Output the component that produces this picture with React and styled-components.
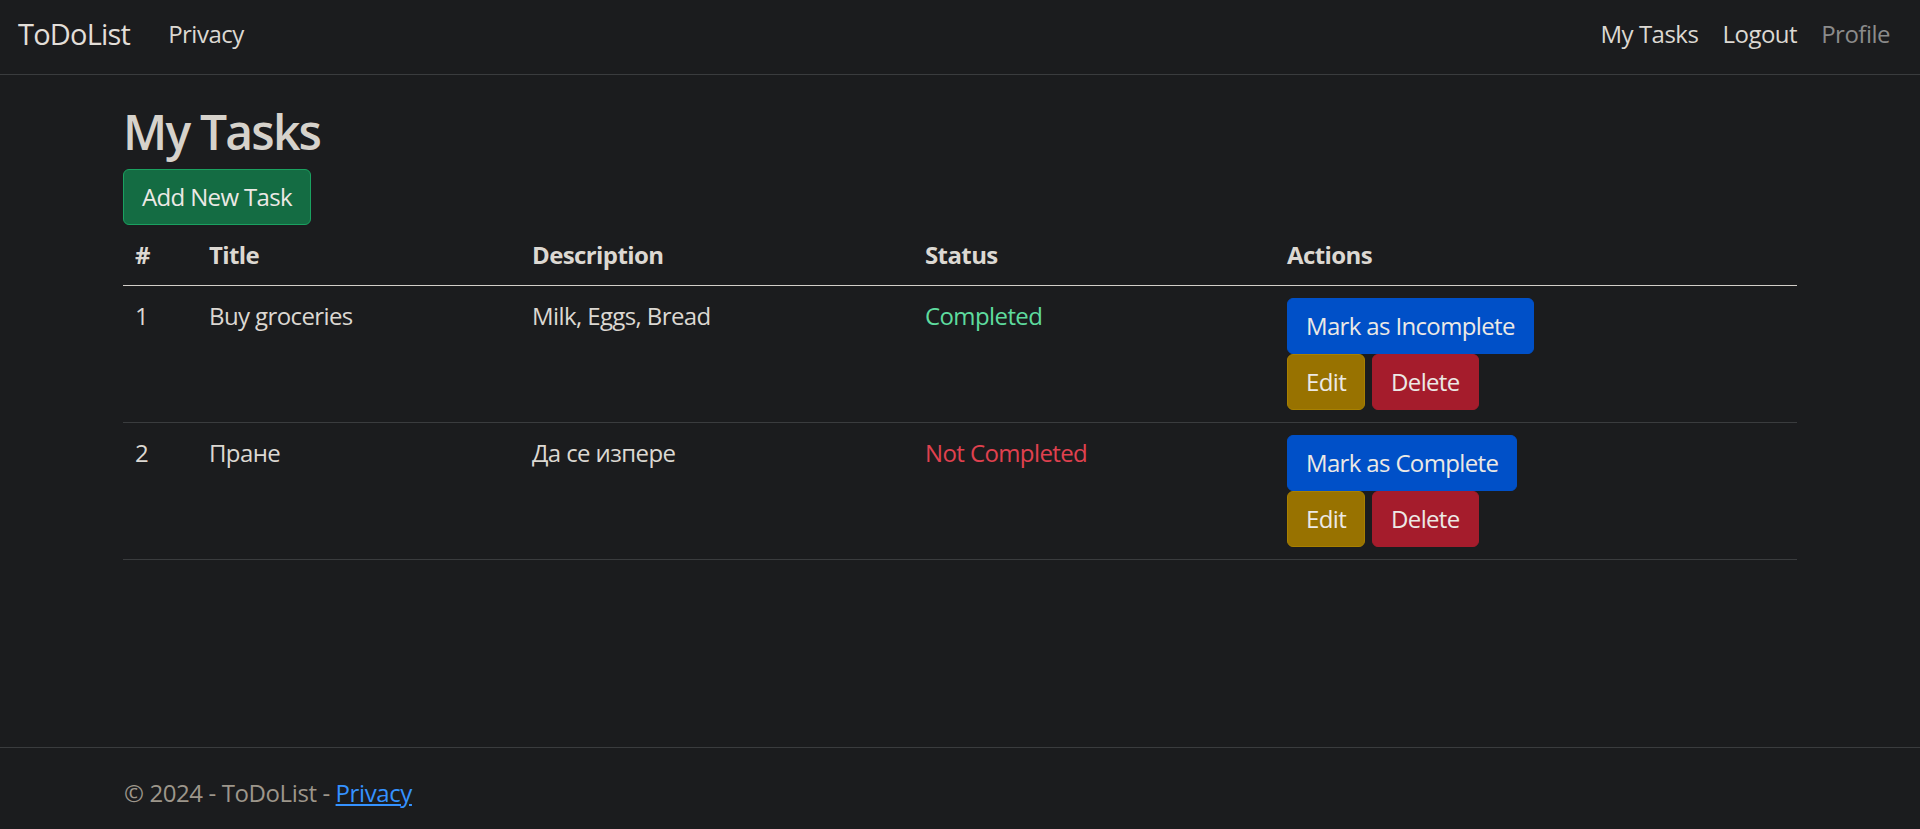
import styled, { createGlobalStyle } from 'styled-components';

const GlobalStyle = createGlobalStyle`
  html, body {
    margin: 0;
    padding: 0;
    background-color: #1b1c1e;
    overflow: hidden;
  }
  body {
    font-family: "Segoe UI", "Open Sans", "Noto Sans", sans-serif;
    font-size: 24px;
    line-height: 1.5;
    color: #dcd8d2;
  }
`;

const Page = styled.div`
  min-height: 100vh;
  display: flex;
  flex-direction: column;
`;

const Navbar = styled.nav`
  height: 75px;
  box-sizing: border-box;
  border-bottom: 1px solid #3a3c3e;
  display: flex;
  align-items: center;
  padding: 0 18px 7px;
`;

const Brand = styled.a`
  font-size: 29px;
  color: #e2ded8;
  margin-right: 26px;
  text-decoration: none;
  letter-spacing: -0.8px;
`;

const NavList = styled.div`
  display: flex;
  align-items: center;
  margin-left: ${(p) => (p.$right ? 'auto' : '0')};
`;

const NavLink = styled.a`
  padding: 0 12px;
  color: ${(p) => (p.$muted ? '#8b8b8b' : '#dcd8d2')};
  text-decoration: none;
  letter-spacing: -0.5px;
`;

const Main = styled.main`
  flex: 1;
  width: 1674px;
  margin: 24px auto 0;
`;

const Heading = styled.h2`
  font-size: 48px;
  font-weight: 600;
  line-height: 1.2;
  margin: 4px 0 8px;
  color: #d6d2cb;
  letter-spacing: -1.8px;
`;

const colors = {
  success: { bg: '#146c43', border: '#1aa160' },
  primary: { bg: '#0050c8', border: '#0050c8' },
  warning: { bg: '#987200', border: '#a88000' },
  danger: { bg: '#a51c2c', border: '#a51c2c' },
};

const Button = styled.button`
  font-family: inherit;
  font-size: 24px;
  line-height: 36px;
  padding: 9px 18px;
  border-radius: 6px;
  border: 1px solid ${(p) => colors[p.$variant].border};
  background-color: ${(p) => colors[p.$variant].bg};
  color: #ece9e5;
  cursor: pointer;
  letter-spacing: -0.65px;
`;

const Table = styled.table`
  width: 100%;
  table-layout: fixed;
  border-collapse: collapse;
`;

const Th = styled.th`
  text-align: left;
  font-weight: 700;
  padding: 12px;
  line-height: 36px;
  border-bottom: 1px solid #d2cec8;
  color: #dcd8d2;
  letter-spacing: -0.6px;
`;

const Td = styled.td`
  padding: 12px;
  line-height: 36px;
  vertical-align: top;
  border-bottom: 1px solid #3a3c3e;
  letter-spacing: -0.6px;
  color: ${(p) => p.$color || '#dcd8d2'};
`;

const Actions = styled.div`
  display: flex;
  flex-wrap: wrap;
  row-gap: 0;
  column-gap: 7px;
`;

const FullRow = styled.div`
  flex-basis: 100%;
  display: flex;
`;

const Footer = styled.footer`
  height: 82px;
  box-sizing: border-box;
  border-top: 1px solid #3a3c3e;
  padding-top: 8px;
  line-height: 74px;
  color: #9d968b;
  white-space: nowrap;
`;

const FooterInner = styled.div`
  width: 1674px;
  margin: 0 auto;
  padding-left: 2px;
  letter-spacing: -0.4px;
`;

const FooterLink = styled.a`
  color: #3592ff;
  text-decoration: underline;
`;

const tasks = [
  { id: 1, title: 'Buy groceries', description: 'Milk, Eggs, Bread', done: true },
  { id: 2, title: 'Пране', description: 'Да се изпере', done: false },
];

export default function App() {
  return (
    <Page>
      <GlobalStyle />
      <Navbar>
        <Brand href="#">ToDoList</Brand>
        <NavList>
          <NavLink href="#">Privacy</NavLink>
        </NavList>
        <NavList $right>
          <NavLink href="#">My Tasks</NavLink>
          <NavLink href="#">Logout</NavLink>
          <NavLink href="#" $muted>Profile</NavLink>
        </NavList>
      </Navbar>
      <Main>
        <Heading>My Tasks</Heading>
        <Button $variant="success">Add New Task</Button>
        <Table>
          <colgroup>
            <col style={{ width: 74 }} />
            <col style={{ width: 323 }} />
            <col style={{ width: 393 }} />
            <col style={{ width: 362 }} />
            <col />
          </colgroup>
          <thead>
            <tr>
              <Th>#</Th>
              <Th>Title</Th>
              <Th>Description</Th>
              <Th>Status</Th>
              <Th>Actions</Th>
            </tr>
          </thead>
          <tbody>
            {tasks.map((t) => (
              <tr key={t.id}>
                <Td>{t.id}</Td>
                <Td>{t.title}</Td>
                <Td>{t.description}</Td>
                <Td $color={t.done ? '#5edb9e' : '#e0414f'}>
                  {t.done ? 'Completed' : 'Not Completed'}
                </Td>
                <Td>
                  <Actions>
                    <FullRow>
                      <Button $variant="primary">
                        {t.done ? 'Mark as Incomplete' : 'Mark as Complete'}
                      </Button>
                    </FullRow>
                    <Button $variant="warning">Edit</Button>
                    <Button $variant="danger">Delete</Button>
                  </Actions>
                </Td>
              </tr>
            ))}
          </tbody>
        </Table>
      </Main>
      <Footer>
        <FooterInner>
          © 2024 - ToDoList - <FooterLink href="#">Privacy</FooterLink>
        </FooterInner>
      </Footer>
    </Page>
  );
}
